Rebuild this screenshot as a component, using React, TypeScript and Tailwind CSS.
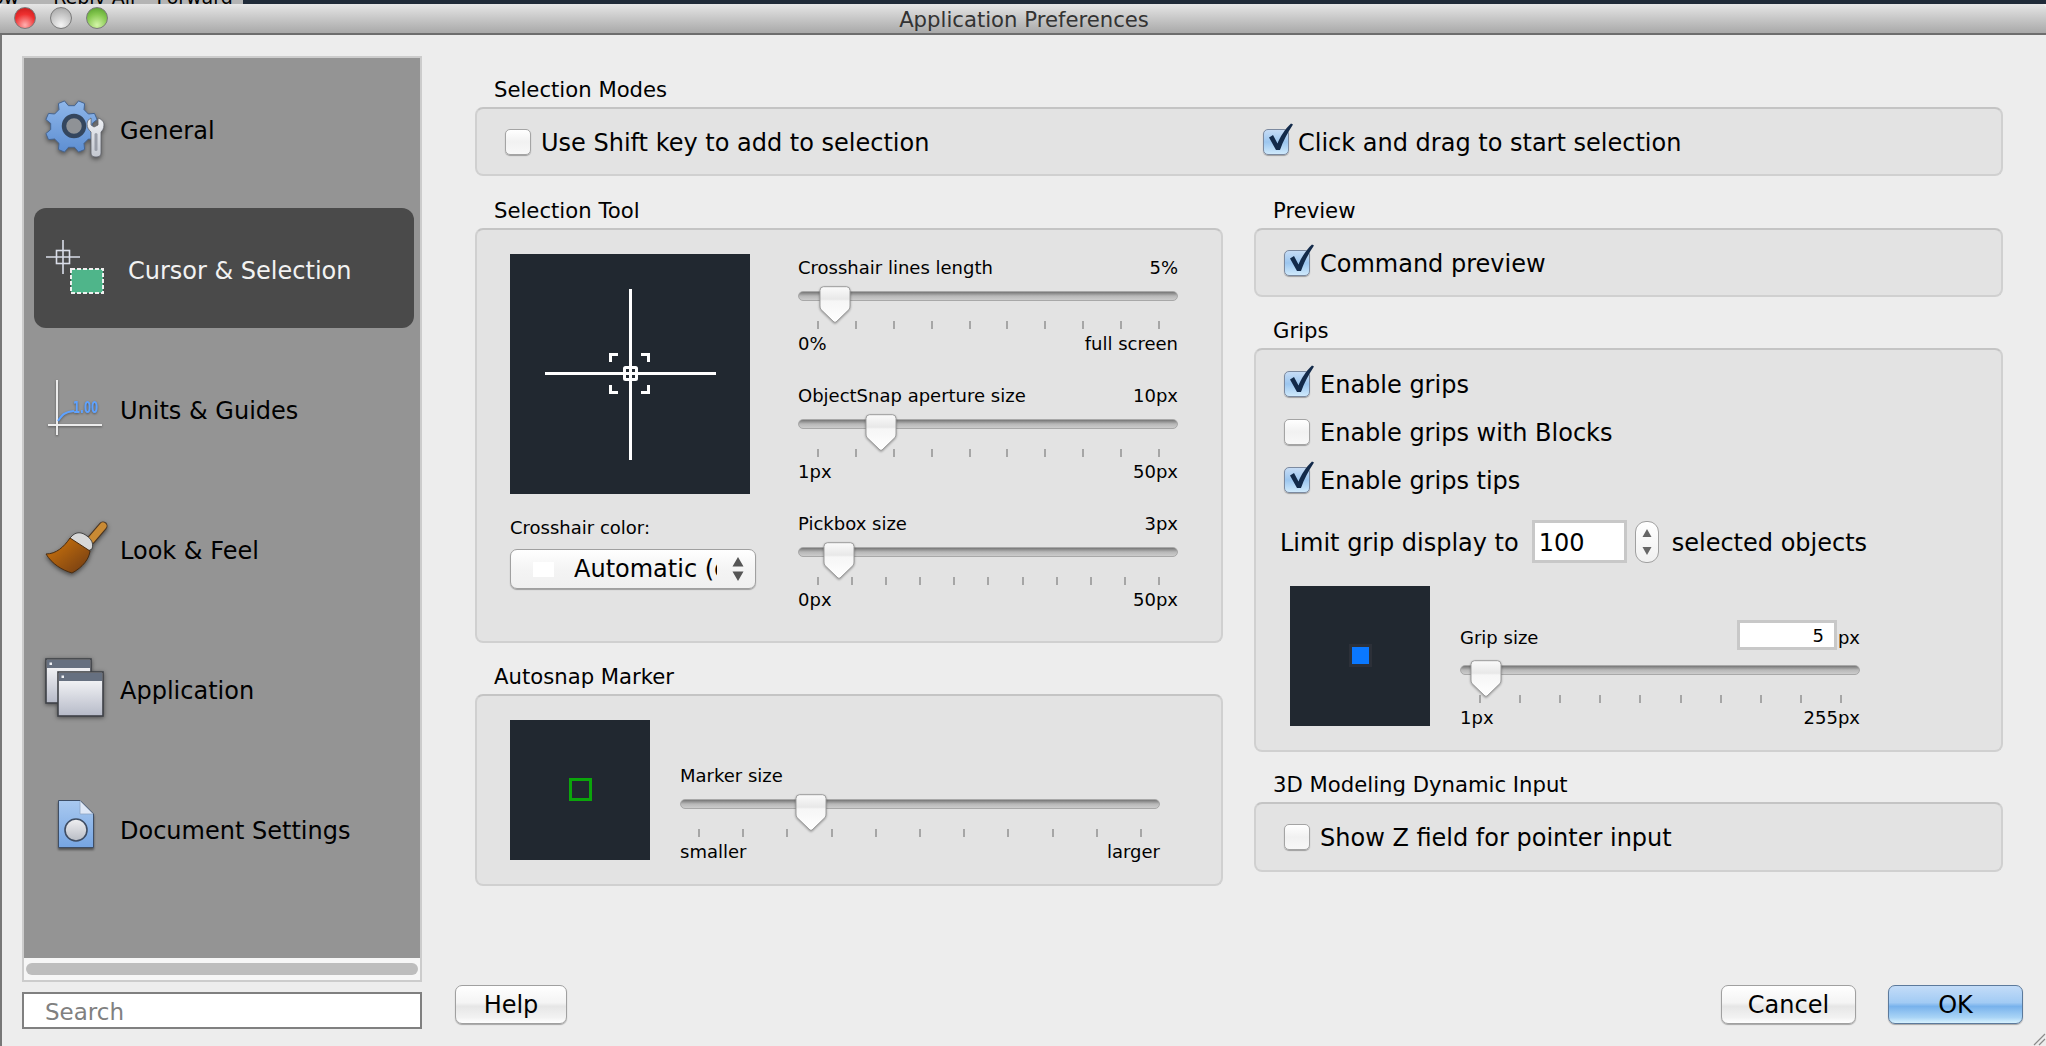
import React from "react";

const Gear: React.FC = () => {
    // eight toothed gear, computed so the teeth stay even
    const cx = 27.5;
    const cy = 29.5;
    const pts: string[] = [];
    for (let i = 0; i < 8; i++) {
        const a = (i * Math.PI) / 4 + Math.PI / 8;
        const step = Math.PI / 8;
        const p = (r: number, t: number) =>
            `${(cx + r * Math.cos(t)).toFixed(1)},${(cy + r * Math.sin(t)).toFixed(1)}`;
        pts.push(p(21, a - step * 0.62), p(26.5, a - step * 0.32), p(26.5, a + step * 0.32), p(21, a + step * 0.62));
    }
    return (
        <svg width="66" height="66" viewBox="0 0 66 66" className="drop-shadow-[0_2px_2px_rgba(0,0,0,0.45)]">
            <defs>
                <linearGradient id="gearFill" x1="0" y1="0" x2="0" y2="1">
                    <stop offset="0" stopColor="#8fb7ea" />
                    <stop offset="1" stopColor="#5d8ed2" />
                </linearGradient>
                <linearGradient id="wrenchFill" x1="0" y1="0" x2="0" y2="1">
                    <stop offset="0" stopColor="#eef0f4" />
                    <stop offset="1" stopColor="#c4c8d0" />
                </linearGradient>
            </defs>
            <polygon points={pts.join(" ")} fill="url(#gearFill)" stroke="#46648f" strokeWidth="1" strokeLinejoin="round" />
            <circle cx="30" cy="29" r="10" fill="#8f9296" stroke="#34465e" strokeWidth="4.5" />
            <path
                d="M43 27 C43 24 45 22 47 21 L47 28 L50 30 L54 28 L54 21 C57 22 60 24 60 28 C60 32 58 34 57 35 L57 56 C57 59 55 60 52 60 C49 60 47 59 47 56 L47 35 C45 33 43 31 43 27 Z"
                fill="url(#wrenchFill)"
                stroke="#5d6068"
                strokeWidth="0.8"
            />
            <rect x="50.5" y="36" width="3" height="18" rx="1.5" fill="#9a9ea8" />
        </svg>
    );
};

const CursorIcon: React.FC = () => (
    <svg width="66" height="66" viewBox="0 0 66 66">
        <g stroke="#d9dde8" strokeWidth="1.6" fill="none">
            <path d="M2 20 H36 M19 3 V37" />
            <rect x="12.5" y="13.5" width="13" height="13" />
        </g>
        <rect x="27" y="32" width="32" height="24" fill="#4fb58a" stroke="#f0f0f0" strokeWidth="2" strokeDasharray="4 2" />
    </svg>
);

const UnitsIcon: React.FC = () => (
    <svg width="66" height="66" viewBox="0 0 66 66" className="drop-shadow-[0_1px_1px_rgba(0,0,0,0.4)]">
        <path d="M13 3 V58 M4 48 H58" stroke="#ececec" strokeWidth="2" fill="none" />
        <path d="M14 44 C18 38 20 35 30 34" stroke="#5ea2ff" strokeWidth="2" fill="none" />
        <text x="29" y="36" fontSize="15" fontWeight="700" fill="#5ea2ff" textLength="25" lengthAdjust="spacingAndGlyphs">
            1.00
        </text>
    </svg>
);

const BrushIcon: React.FC = () => (
    <svg width="66" height="66" viewBox="0 0 66 66" className="drop-shadow-[0_2px_2px_rgba(0,0,0,0.5)]">
        <defs>
            <linearGradient id="bristle" x1="0" y1="0" x2="1" y2="1">
                <stop offset="0" stopColor="#d4780a" />
                <stop offset="1" stopColor="#6e3a14" />
            </linearGradient>
        </defs>
        <path d="M47 23 L59 9" stroke="#4a3420" strokeWidth="9" strokeLinecap="round" />
        <path d="M47 23 L59 9" stroke="#c98a34" strokeWidth="7" strokeLinecap="round" />
        <path d="M27 20 C32 14 38 15 43 19 C47 22 50 26 48 32 L44 34 L25 22 Z" fill="#d8d8d8" stroke="#444" strokeWidth="1" />
        <path
            d="M26 21 L46 34 C45 42 39 50 28 56 C18 53 8 47 2 37 C12 37 20 30 26 21 Z"
            fill="url(#bristle)"
            stroke="#4a2c10"
            strokeWidth="1"
        />
    </svg>
);

const WindowShape: React.FC<{ x: number; y: number; w: number; h: number }> = ({ x, y, w, h }) => (
    <g>
        <rect x={x} y={y} width={w} height={h} fill="url(#winBody)" stroke="#3f4248" strokeWidth="1.6" />
        <rect x={x + 1} y={y + 1} width={w - 2} height="8" fill="#667080" />
        <rect x={x + 3.5} y={y + 3.5} width="2.5" height="2.5" fill="#eef0f4" />
    </g>
);

const ApplicationIcon: React.FC = () => (
    <svg width="66" height="66" viewBox="0 0 66 66" className="drop-shadow-[0_1px_2px_rgba(0,0,0,0.5)]">
        <defs>
            <linearGradient id="winBody" x1="0" y1="0" x2="0" y2="1">
                <stop offset="0" stopColor="#ffffff" />
                <stop offset="1" stopColor="#b6bac8" />
            </linearGradient>
        </defs>
        <WindowShape x={2} y={2} w={45} h={44} />
        <WindowShape x={14} y={15} w={45} h={44} />
    </svg>
);

const DocumentIcon: React.FC = () => (
    <svg width="66" height="66" viewBox="0 0 66 66" className="drop-shadow-[0_2px_1px_rgba(0,0,0,0.45)]">
        <defs>
            <linearGradient id="docFill" x1="0" y1="0" x2="0" y2="1">
                <stop offset="0" stopColor="#a9c9f0" />
                <stop offset="1" stopColor="#76a5e2" />
            </linearGradient>
            <linearGradient id="docDot" x1="0" y1="0" x2="0" y2="1">
                <stop offset="0" stopColor="#f0f0f2" />
                <stop offset="1" stopColor="#b8bcc4" />
            </linearGradient>
        </defs>
        <path d="M14.5 3.5 H36 L49.5 17 V50.5 H14.5 Z" fill="url(#docFill)" stroke="#3e4e66" strokeWidth="1" />
        <path d="M36 4 V17 H49" fill="#dfe8f6" stroke="#8ea4c4" strokeWidth="0.8" />
        <circle cx="32" cy="33" r="11" fill="url(#docDot)" stroke="#3f4d63" strokeWidth="1.6" />
    </svg>
);

const NavItem: React.FC<{ label: string; icon: React.ReactNode; active?: boolean }> = ({ label, icon, active }) => (
    <div
        className={
            active
                ? "-mt-[2px] mb-[2px] flex h-[120px] items-center rounded-[12px] bg-[#4a4a4a] pt-[4px] pl-[10px] text-[#f2f2f2]"
                : "flex h-[120px] items-center pl-[10px] text-black"
        }
    >
        <div className="w-[76px] shrink-0">{icon}</div>
        <span className={active ? "ml-2 pt-[2px] text-[24px]" : "pt-[2px] text-[24px]"}>{label}</span>
    </div>
);

const Check: React.FC<{ checked?: boolean }> = ({ checked }) => (
    <div className="relative h-[26px] w-[26px] shrink-0">
        <div
            className={
                checked
                    ? "h-full w-full rounded-[5px] border border-[#7c8aa0] bg-gradient-to-b from-[#c6dcf5] via-[#9cc6ef] to-[#cfe9fb] shadow-[0_1px_1px_rgba(0,0,0,0.3)]"
                    : "h-full w-full rounded-[5px] border border-[#a4a4a4] bg-gradient-to-b from-white via-[#f1f1f1] to-[#f8f8f8] shadow-[0_1px_1px_rgba(0,0,0,0.3)]"
            }
        />
        {checked && (
            <svg width="32" height="32" viewBox="0 0 32 32" className="absolute -top-[6px] left-0">
                <path d="M6 14.5 L10 12 L14.5 20.5 C17 14 22 6 28 0.5 L30 1.5 C25 9 20 18 17 27 L13 27 Z" fill="#132a4a" />
            </svg>
        )}
    </div>
);

const CheckRow: React.FC<{ label: string; checked?: boolean; gap?: string }> = ({ label, checked, gap }) => (
    <div className={`flex h-[26px] items-center ${gap ?? "gap-[10px]"}`}>
        <Check checked={checked} />
        <span className="pt-[2px] text-[24px] whitespace-nowrap text-black">{label}</span>
    </div>
);

const Group: React.FC<{ title: string; className?: string; wrapClass?: string; children: React.ReactNode }> = ({
    title,
    className,
    wrapClass,
    children,
}) => (
    <div className={wrapClass}>
        <div className="mb-[5px] flex h-[24px] items-center pl-[19px] text-[21.2px] whitespace-nowrap text-black">{title}</div>
        <div
            className={`rounded-[8px] border-2 border-[#d0d0d0] border-t-[#c4c4c4] bg-[#e3e3e3] ${className ?? ""}`}
        >
            {children}
        </div>
    </div>
);

const Thumb: React.FC<{ left: number }> = ({ left }) => (
    <svg
        width="32"
        height="37"
        viewBox="0 0 32 37"
        className="absolute -top-[6px] drop-shadow-[0_1px_1px_rgba(0,0,0,0.35)]"
        style={{ left }}
    >
        <defs>
            <linearGradient id="thumbFill" x1="0" y1="0" x2="0" y2="1">
                <stop offset="0" stopColor="#fbfbfb" />
                <stop offset="0.35" stopColor="#e8e8e8" />
                <stop offset="0.4" stopColor="#f6f6f6" />
                <stop offset="1" stopColor="#ffffff" />
            </linearGradient>
        </defs>
        <path
            d="M4.5 0.7 H27.5 Q31 0.7 31 4.5 V20 Q31 22 30 23.5 L17 36 Q16 36.7 15 36 L2 23.5 Q1 22 1 20 V4.5 Q1 0.7 4.5 0.7 Z"
            fill="url(#thumbFill)"
            stroke="#9c9c9c"
            strokeWidth="1"
        />
    </svg>
);

interface SliderProps {
    label: string;
    value?: React.ReactNode;
    min: string;
    max: string;
    thumb: number;
    ticks: number;
    tickClass: string;
    trackClass?: string;
    widthClass: string;
}

const Slider: React.FC<SliderProps> = ({ label, value, min, max, thumb, ticks, tickClass, trackClass, widthClass }) => (
    <div className={`${widthClass} text-[18px] text-black`}>
        <div className="flex h-[20px] items-center justify-between whitespace-nowrap">
            <span>{label}</span>
            {value}
        </div>
        <div
            className={`relative h-[10px] rounded-full border border-[#a8a8a8] bg-gradient-to-b from-[#777777] via-[#b8b8b8] to-[#cccccc] ${trackClass ?? "mt-[14px]"}`}
        >
            <Thumb left={thumb} />
        </div>
        <div className={`mt-[20px] flex h-[8px] justify-between ${tickClass}`}>
            {Array.from({ length: ticks }).map((_, i) => (
                <span key={i} className="h-[8px] w-[2px] bg-[#a6a6a6]" />
            ))}
        </div>
        <div className="mt-[4px] flex h-[20px] items-center justify-between whitespace-nowrap">
            <span>{min}</span>
            <span>{max}</span>
        </div>
    </div>
);

const Crosshair: React.FC = () => (
    <svg width="240" height="240" viewBox="0 0 240 240" className="block">
        <g fill="#ffffff">
            <rect x="119" y="35" width="3" height="171" />
            <rect x="35" y="118" width="171" height="3" />
        </g>
        <g stroke="#ffffff" strokeWidth="3" fill="none">
            <path d="M100.5 108 V100.5 H108 M131 100.5 H138.5 V108 M100.5 131 V138.5 H108 M131 138.5 H138.5 V131" />
            <rect x="114.5" y="113.5" width="12" height="12" fill="#212830" rx="1" />
            <path d="M114 119.5 H127 M120.5 113 V126" />
        </g>
    </svg>
);

const SelectArrows: React.FC = () => (
    <svg width="14" height="26" viewBox="0 0 14 26">
        <path d="M7 1 L12.5 10.5 H1.5 Z M7 25 L12.5 15.5 H1.5 Z" fill="#555555" />
    </svg>
);

const MacButton: React.FC<{ label: string; className: string; primary?: boolean }> = ({ label, className, primary }) => (
    <button
        className={`flex h-[39px] items-center justify-center rounded-[7px] border text-[24px] text-black shadow-[0_1px_1px_rgba(0,0,0,0.3)] ${className} ${
            primary
                ? "border-[#5c7a9c] bg-[linear-gradient(#c3dcf8_0%,#a2cbf4_45%,#78b2ec_55%,#a9d4f6_85%,#d8f2fe_100%)]"
                : "border-[#a0a0a0] bg-[linear-gradient(#ffffff_0%,#f4f4f4_45%,#e6e6e6_55%,#f2f2f2_85%,#ffffff_100%)]"
        }`}
    >
        {label}
    </button>
);

const FieldBox: React.FC<{ className: string; children: React.ReactNode }> = ({ className, children }) => (
    <div className={`flex items-center border-[3px] border-[#c8c8c8] bg-white text-black ${className}`}>{children}</div>
);

const Light: React.FC<{ className: string }> = ({ className }) => (
    <span className={`h-[22px] w-[22px] rounded-full border border-[#7a7a7a] ${className}`} />
);

export default function App() {
    return (
        <div className="flex h-[1046px] w-[2046px] flex-col overflow-hidden bg-[#ededed] font-['DejaVu_Sans',sans-serif]">
            {/* sliver of the desktop above the window */}
            <div className="flex h-[4px] shrink-0 overflow-hidden bg-[#1f2a38]">
                <div className="-mt-[13px] flex h-[21px] w-[243px] shrink-0 bg-[#b4b4b4] text-[19px] leading-[21px] whitespace-nowrap text-black">
                    <span className="-ml-[8px]">ow</span>
                    <span className="ml-[34px]">Rebiv All</span>
                    <span className="ml-[21px]">Forward</span>
                </div>
            </div>

            {/* title bar */}
            <div className="relative flex h-[31px] shrink-0 items-center justify-center rounded-t-[5px] border-b-2 border-[#6e6e6e] bg-gradient-to-b from-[#e6e6e6] to-[#a9a9a9] pl-[2px]">
                <div className="absolute top-[3px] left-[14px] flex gap-[14px]">
                    <Light className="bg-[radial-gradient(circle_at_50%_85%,#ffb0b0,#ee3030_55%,#c01818)]" />
                    <Light className="bg-[radial-gradient(circle_at_50%_85%,#f4f4f4,#c6c6c6_55%,#a0a0a0)]" />
                    <Light className="bg-[radial-gradient(circle_at_50%_85%,#d4f5a8,#86c850_55%,#4f9a28)]" />
                </div>
                <span className="pt-[2px] text-[21.2px] text-[#333333]">Application Preferences</span>
            </div>

            <div className="relative flex min-h-0 flex-1 border-l-2 border-[#777777]">
                {/* sidebar */}
                <aside className="mt-[21px] ml-[20px] flex w-[400px] shrink-0 flex-col">
                    <div className="flex h-[926px] flex-col border-2 border-[#cccccc]">
                        <div className="flex flex-1 flex-col gap-[20px] bg-[#949494] pt-[12px] pr-[6px] pl-[10px]">
                            <NavItem label="General" icon={<Gear />} />
                            <NavItem label="Cursor & Selection" icon={<CursorIcon />} active />
                            <NavItem label="Units & Guides" icon={<UnitsIcon />} />
                            <NavItem label="Look & Feel" icon={<BrushIcon />} />
                            <NavItem label="Application" icon={<ApplicationIcon />} />
                            <NavItem label="Document Settings" icon={<DocumentIcon />} />
                        </div>
                        <div className="flex h-[22px] items-center bg-[#f6f6f6] px-[2px]">
                            <div className="h-[12px] w-full rounded-full bg-[#bdbdbd]" />
                        </div>
                    </div>
                    <div className="mt-[10px] flex h-[37px] items-center border-2 border-[#808080] bg-white pt-[3px] pl-[21px] text-[23px] text-[#808080]">
                        Search
                    </div>
                </aside>

                <main className="ml-[53px] flex w-[1528px] shrink-0 flex-col pt-[43px] pb-[22px]">
                    <Group title="Selection Modes" className="flex h-[69px] items-center pl-[28px]">
                        <div className="w-[758px]">
                            <CheckRow label="Use Shift key to add to selection" />
                        </div>
                        <CheckRow label="Click and drag to start selection" checked gap="gap-[9px]" />
                    </Group>

                    <div className="mt-[23px] flex gap-[31px]">
                        <div className="flex w-[748px] shrink-0 flex-col gap-[22px]">
                            <Group title="Selection Tool" className="flex h-[415px] pt-[24px] pl-[33px]">
                                <div className="w-[246px] shrink-0">
                                    <div className="h-[240px] w-[240px] bg-[#212830]">
                                        <Crosshair />
                                    </div>
                                    <div className="mt-[23px] flex h-[20px] items-center text-[18px] text-black">Crosshair color:</div>
                                    <div className="mt-[12px] flex h-[40px] items-center rounded-[7px] border border-[#a0a0a0] bg-gradient-to-b from-white via-[#f4f4f4] to-[#f0f0f0] pl-[22px] shadow-[0_1px_1px_rgba(0,0,0,0.3)]">
                                        <span className="h-[15px] w-[21px] bg-white" />
                                        <span className="ml-[20px] w-[143px] overflow-hidden text-[24px] whitespace-nowrap text-black">
                                            Automatic (default)
                                        </span>
                                        <span className="ml-[14px]">
                                            <SelectArrows />
                                        </span>
                                    </div>
                                </div>
                                <div className="ml-[42px] flex flex-col gap-[32px] pt-[3px]">
                                    <Slider
                                        label="Crosshair lines length"
                                        value={<span>5%</span>}
                                        min="0%"
                                        max="full screen"
                                        thumb={20}
                                        ticks={10}
                                        tickClass="pr-[18px] pl-[19px]"
                                        widthClass="w-[380px]"
                                    />
                                    <Slider
                                        label="ObjectSnap aperture size"
                                        value={<span>10px</span>}
                                        min="1px"
                                        max="50px"
                                        thumb={66}
                                        ticks={10}
                                        tickClass="pr-[18px] pl-[19px]"
                                        widthClass="w-[380px]"
                                    />
                                    <Slider
                                        label="Pickbox size"
                                        value={<span>3px</span>}
                                        min="0px"
                                        max="50px"
                                        thumb={24}
                                        ticks={11}
                                        tickClass="pr-[18px] pl-[19px]"
                                        widthClass="w-[380px]"
                                    />
                                </div>
                            </Group>

                            <Group title="Autosnap Marker" className="flex h-[192px] pt-[24px] pl-[33px]">
                                <div className="flex h-[140px] w-[140px] shrink-0 items-center justify-center bg-[#212830]">
                                    <span className="-mt-[1px] h-[23px] w-[23px] border-[3px] border-[#0ba50b]" />
                                </div>
                                <div className="mt-[45px] ml-[30px]">
                                    <Slider
                                        label="Marker size"
                                        min="smaller"
                                        max="larger"
                                        thumb={114}
                                        ticks={11}
                                        tickClass="px-[18px]"
                                        widthClass="w-[480px]"
                                    />
                                </div>
                            </Group>
                        </div>

                        <div className="flex w-[749px] shrink-0 flex-col gap-[22px]">
                            <Group title="Preview" className="h-[69px] pt-[20px] pl-[28px]">
                                <CheckRow label="Command preview" checked />
                            </Group>

                            <Group title="Grips" className="h-[404px] pt-[21px] pl-[28px]">
                                <div className="flex flex-col gap-[22px]">
                                    <CheckRow label="Enable grips" checked />
                                    <CheckRow label="Enable grips with Blocks" />
                                    <CheckRow label="Enable grips tips" checked />
                                </div>
                                <div className="mt-[27px] -ml-[4px] flex h-[43px] items-center text-[24px] whitespace-nowrap text-black">
                                    <span className="pt-[2px]">Limit grip display to</span>
                                    <FieldBox className="ml-[13px] h-[43px] w-[95px] pt-[2px] pl-[4px]">100</FieldBox>
                                    <div className="ml-[8px] flex h-[42px] w-[24px] flex-col items-center justify-between rounded-[11px] border border-[#a0a0a0] bg-gradient-to-b from-white to-[#f0f0f0] py-[6px]">
                                        <svg width="10" height="10" viewBox="0 0 10 10">
                                            <path d="M5 1 L9.5 9 H0.5 Z" fill="#666666" />
                                        </svg>
                                        <svg width="10" height="10" viewBox="0 0 10 10">
                                            <path d="M5 9 L9.5 1 H0.5 Z" fill="#666666" />
                                        </svg>
                                    </div>
                                    <span className="ml-[13px] pt-[2px]">selected objects</span>
                                </div>
                                <div className="mt-[23px] ml-[6px] flex">
                                    <div className="flex h-[140px] w-[140px] shrink-0 items-center justify-center bg-[#212830]">
                                        <span className="-mt-[1px] h-[23px] w-[23px] border-[3px] border-[#2c3038] bg-[#0a78ff]" />
                                    </div>
                                    <div className="mt-[41px] ml-[30px]">
                                        <Slider
                                            label="Grip size"
                                            value={
                                                <span className="flex items-center">
                                                    <FieldBox className="mb-[4px] h-[30px] w-[100px] justify-end pr-[10px]">5</FieldBox>
                                                    <span className="ml-[1px]">px</span>
                                                </span>
                                            }
                                            min="1px"
                                            max="255px"
                                            thumb={9}
                                            ticks={10}
                                            tickClass="pr-[18px] pl-[19px]"
                                            trackClass="mt-[18px]"
                                            widthClass="w-[400px]"
                                        />
                                    </div>
                                </div>
                            </Group>

                            <Group
                                title="3D Modeling Dynamic Input"
                                wrapClass="-mt-[1px]"
                                className="h-[70px] pt-[20px] pl-[28px]"
                            >
                                <CheckRow label="Show Z field for pointer input" />
                            </Group>
                        </div>
                    </div>

                    <div className="-mx-[20px] mt-auto flex items-center">
                        <MacButton label="Help" className="w-[112px]" />
                        <div className="ml-auto flex gap-[32px]">
                            <MacButton label="Cancel" className="w-[135px]" />
                            <MacButton label="OK" className="w-[135px]" primary />
                        </div>
                    </div>
                </main>

                <svg width="16" height="16" viewBox="0 0 16 16" className="absolute right-0 bottom-0">
                    <path d="M15 4 L4 15 M15 9 L9 15" stroke="#8a8a8a" strokeWidth="1.2" />
                </svg>
            </div>
        </div>
    );
}
